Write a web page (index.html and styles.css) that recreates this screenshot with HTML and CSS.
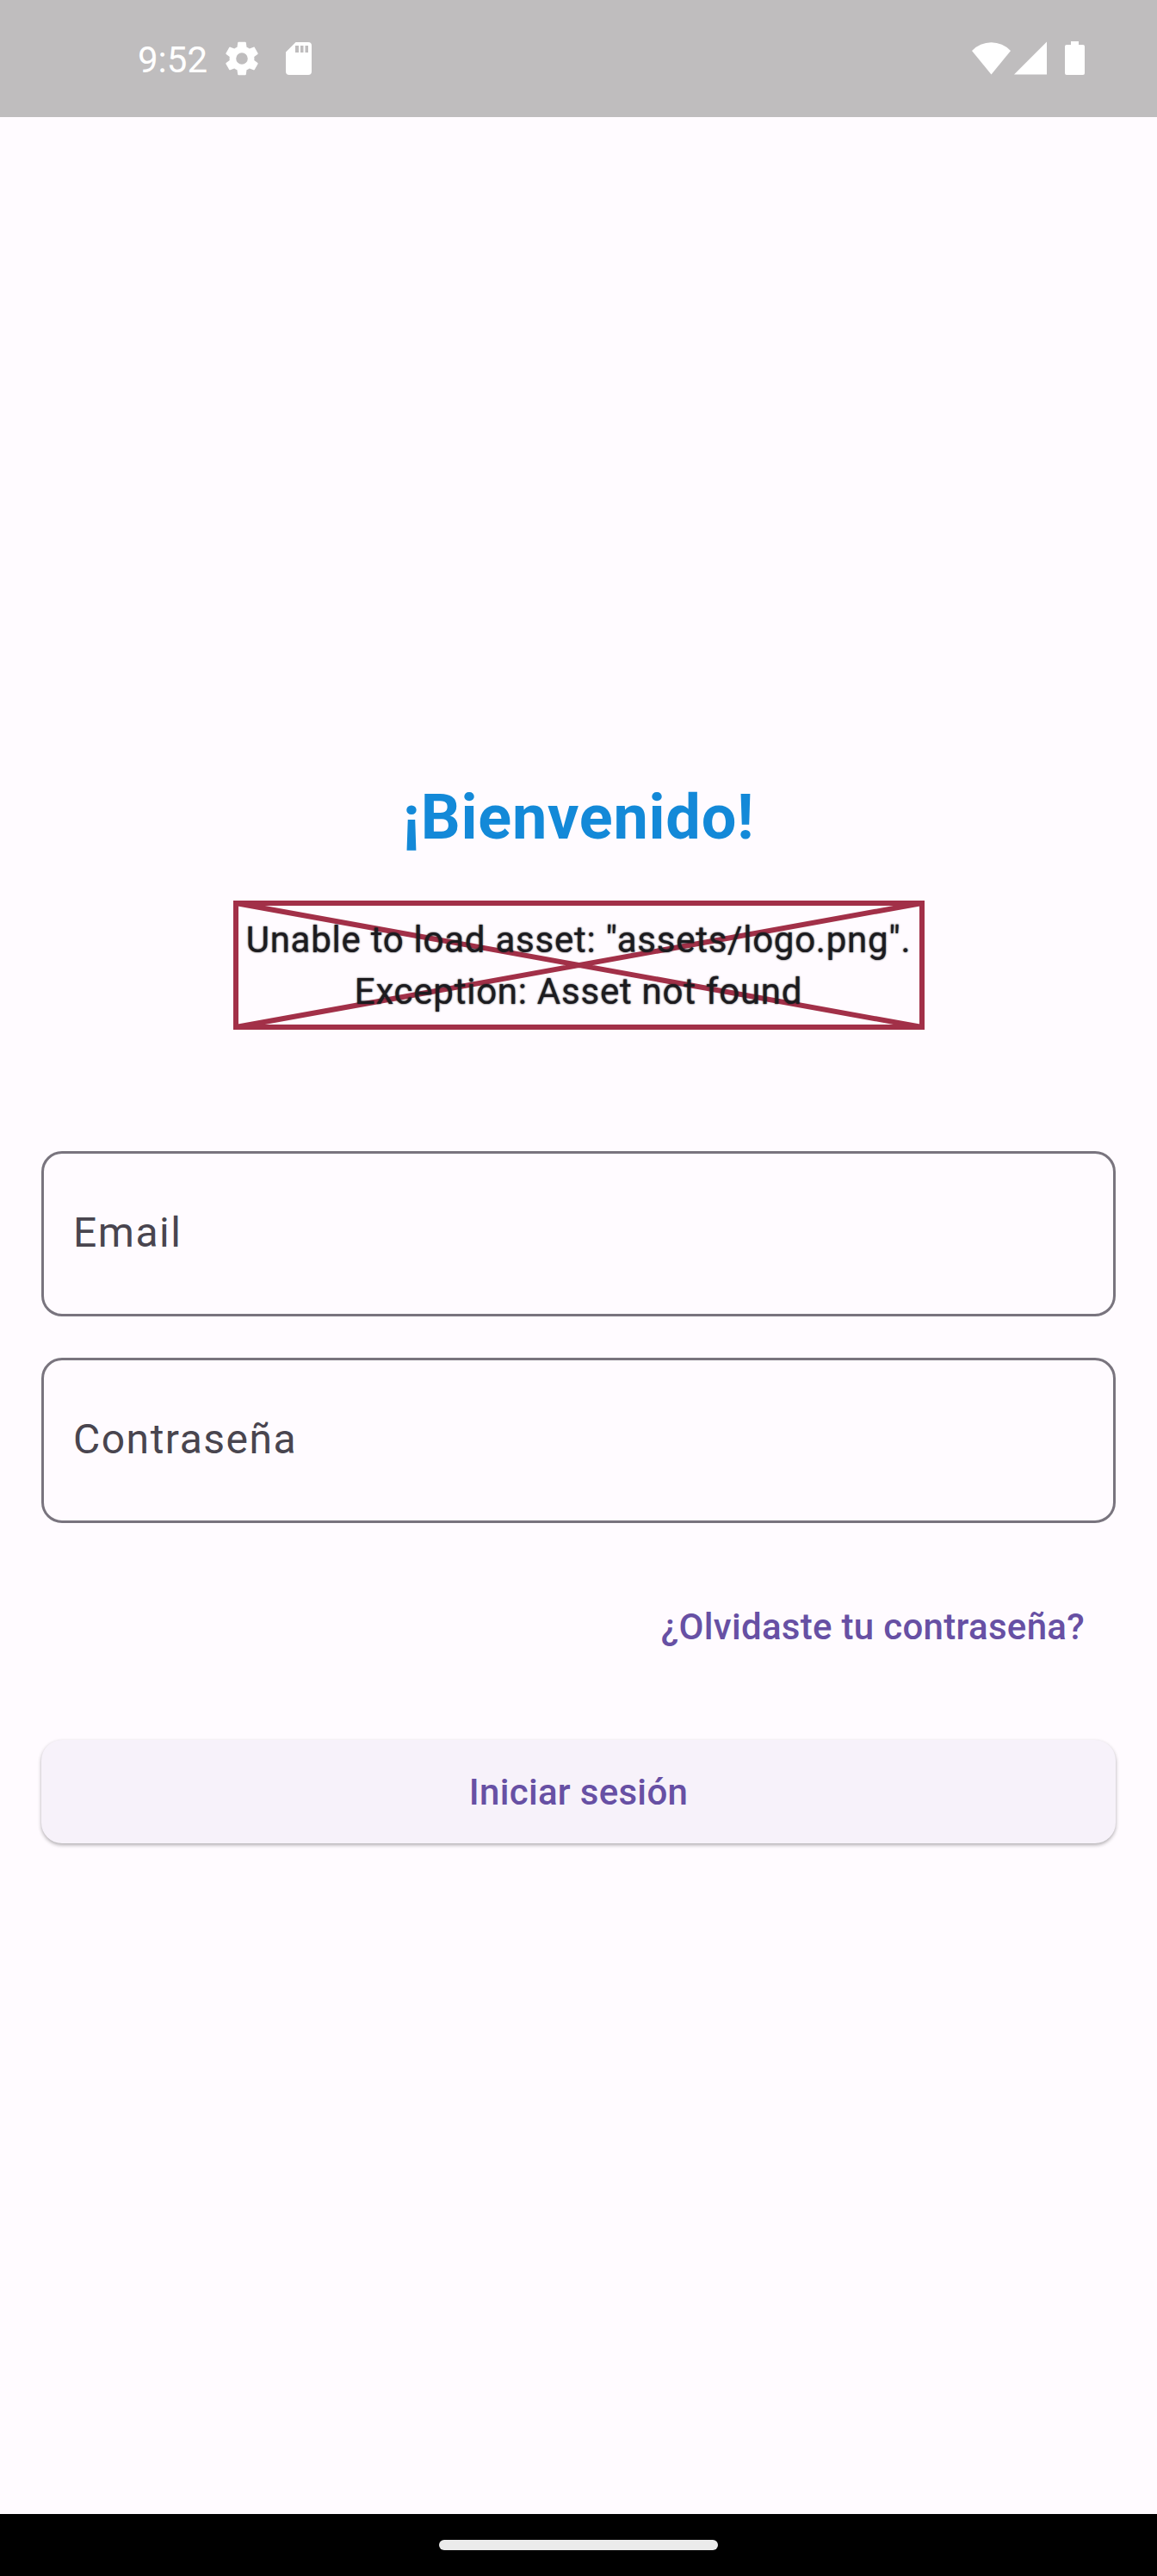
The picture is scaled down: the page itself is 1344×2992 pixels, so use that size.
FILE: index.html
```html
<!DOCTYPE html>
<html lang="es">
<head>
<meta charset="utf-8">
<title>Bienvenido</title>
<link rel="stylesheet" href="styles.css">
</head>
<body>
<div class="screen">
  <header class="status">
    <span class="clock">9:52</span>
    <svg class="gear" width="48" height="48" viewBox="0 0 24 24"><path fill="#fff" d="M19.14 12.94c.04-.3.06-.61.06-.94 0-.32-.02-.64-.07-.94l2.03-1.58c.18-.14.23-.41.12-.61l-1.92-3.32c-.12-.22-.37-.29-.59-.22l-2.39.96c-.5-.38-1.03-.7-1.62-.94L14.4 2.81c-.04-.24-.24-.41-.48-.41h-3.84c-.24 0-.43.17-.47.41l-.36 2.54c-.59.24-1.13.57-1.62.94l-2.39-.96c-.22-.08-.47 0-.59.22L2.74 8.87c-.12.21-.08.47.12.61l2.03 1.58c-.05.3-.09.63-.09.94s.02.64.07.94l-2.03 1.58c-.18.14-.23.41-.12.61l1.92 3.32c.12.22.37.29.59.22l2.39-.96c.5.38 1.03.7 1.62.94l.36 2.54c.05.24.24.41.48.41h3.84c.24 0 .44-.17.47-.41l.36-2.54c.59-.24 1.13-.56 1.62-.94l2.39.96c.22.08.47 0 .59-.22l1.92-3.32c.12-.22.07-.47-.12-.61l-2.01-1.58zM12 15.4a3.4 3.4 0 1 1 0-6.8 3.4 3.4 0 0 1 0 6.8z"/></svg>
    <svg class="card" width="30" height="38" viewBox="0 0 30 38"><path fill="#fff" fill-rule="evenodd" d="M11.500 0H26q4 0 4 4V34q0 4-4 4H4q-4 0-4-4V11.500ZM11 4V12H15V4ZM17 4V12H20.500V4ZM22.500 4V12H26V4Z"/></svg>
    <svg class="signals" width="131" height="40" viewBox="0 0 131 40"><g fill="#fff"><path d="M0 11A31 31 0 0 1 45 11L22.500 38.500Z"/><path d="M49 38.500H87V.5Z"/><path d="M115 0h9v4h5q2 0 2 2v31q0 2-2 2h-19q-2 0-2-2V6q0-2 2-2h5z"/></g></svg>
  </header>
  <main class="content">
    <h1 class="title">¡Bienvenido!</h1>
    <div class="error">
      <svg class="cross" width="803" height="150" viewBox="0 0 803 150"><path fill="none" stroke="#a23048" stroke-width="6" d="M3 3H800V147H3ZM3 3L800 147M800 3L3 147"/></svg>
      <p class="message">Unable to load asset: "assets/logo.png".<br>Exception: Asset not found</p>
    </div>
    <div class="field email">Email</div>
    <div class="field password">Contraseña</div>
    <a class="forgot">¿Olvidaste tu contraseña?</a>
    <button class="login">Iniciar sesión</button>
  </main>
  <footer class="nav"><div class="pill"></div></footer>
</div>
</body>
</html>
```
FILE: styles.css
```css
* { box-sizing: border-box; }
body { margin: 0; }
.screen {
  width: 1344px;
  height: 2992px;
  display: flex;
  flex-direction: column;
  background: #fffbff;
  font-family: Roboto, sans-serif;
}
.status {
  height: 136px;
  background: #bfbdbe;
  display: flex;
  align-items: center;
  padding: 0 84px 0 160px;
  color: #fff;
}
.clock { font-size: 42px; width: 97px; padding-top: 3px; }
.card { margin-left: 27px; }
.signals { margin-left: auto; }
.content {
  flex: 1;
  display: flex;
  flex-direction: column;
  padding: 774px 48px 0;
}
.title {
  margin: 0;
  height: 80px;
  line-height: 80px;
  text-align: center;
  font-size: 72px;
  font-weight: 700;
  letter-spacing: 0.75px;
  color: #1389d8;
}
.error {
  position: relative;
  width: 803px;
  height: 150px;
  margin: 56px auto 141px;
}
.cross { position: absolute; left: 0; top: 0; }
.message {
  position: relative;
  margin: 0;
  padding-top: 16px;
  text-align: center;
  white-space: nowrap;
  font-size: 42px;
  line-height: 60px;
  font-weight: 400;
  letter-spacing: 0.75px;
  color: #1c1b1f;
  text-shadow: 0 0 2px #1c1b1f;
}
.field {
  height: 192px;
  border: 3px solid #79747e;
  border-radius: 24px;
  padding-left: 34px;
  line-height: 184px;
  font-size: 48px;
  letter-spacing: 1.5px;
  color: #49454f;
}
.password { margin-top: 48px; }
.forgot {
  align-self: flex-end;
  margin: 91px 36px 0 0;
  height: 60px;
  line-height: 60px;
  font-size: 42px;
  font-weight: 500;
  letter-spacing: 0.3px;
  color: #6750a4;
}
.login {
  margin-top: 101px;
  height: 120px;
  border: 0;
  border-radius: 24px;
  background: #f7f2fa;
  box-shadow: 0 2px 4px rgba(0,0,0,.32);
  font: 500 42px Roboto, sans-serif;
  letter-spacing: 0.3px;
  color: #6750a4;
}
.nav {
  height: 72px;
  background: #000;
  display: flex;
  align-items: center;
  justify-content: center;
}
.pill { width: 324px; height: 12px; border-radius: 6px; background: #ebebeb; }
```
